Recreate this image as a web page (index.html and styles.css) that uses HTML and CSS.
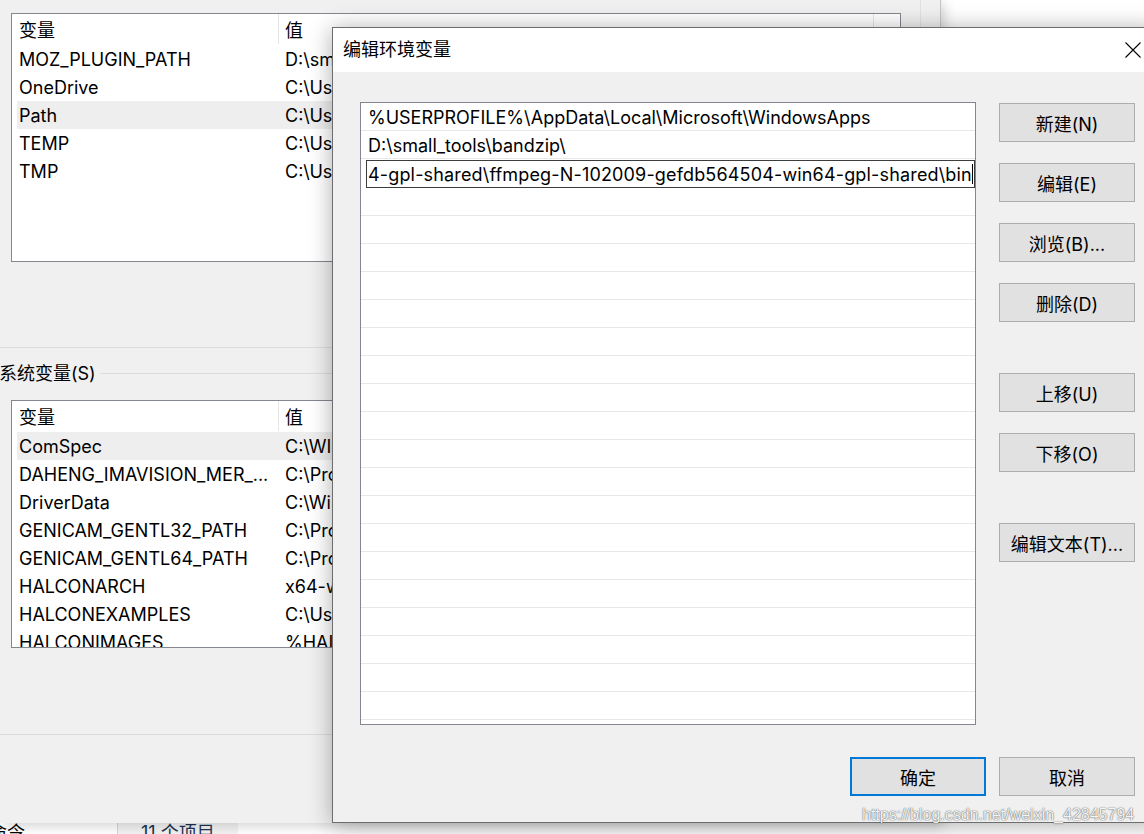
FILE: index.html
```html
<!DOCTYPE html>
<html lang="zh-CN">
<head>
<meta charset="utf-8">
<title>编辑环境变量</title>
<link rel="stylesheet" href="styles.css">
</head>
<body>
<div class="strip">
  <div class="s1"><span class="cut">命令</span></div>
  <div class="s2">11 个项目</div>
  <div class="s3"></div>
</div>

<div class="envwin">
  <div class="envmain">
    <div class="lv lv-user">
      <div class="lv-head"><div class="c1">变量</div><div class="c2">值</div><div class="c3"></div></div>
      <div class="lv-row"><div class="c1">MOZ_PLUGIN_PATH</div><div class="c2">D:\sm</div></div>
      <div class="lv-row"><div class="c1">OneDrive</div><div class="c2">C:\Use</div></div>
      <div class="lv-row sel"><div class="c1">Path</div><div class="c2">C:\Use</div></div>
      <div class="lv-row"><div class="c1">TEMP</div><div class="c2">C:\Use</div></div>
      <div class="lv-row"><div class="c1">TMP</div><div class="c2">C:\Use</div></div>
    </div>
    <div class="sep sep1"></div>
    <div class="group"><span class="glabel">系统变量(S)</span><span class="gline"></span></div>
    <div class="lv lv-sys">
      <div class="lv-head"><div class="c1">变量</div><div class="c2">值</div><div class="c3"></div></div>
      <div class="lv-row sel"><div class="c1">ComSpec</div><div class="c2">C:\WIN</div></div>
      <div class="lv-row"><div class="c1">DAHENG_IMAVISION_MER_...</div><div class="c2">C:\Pro</div></div>
      <div class="lv-row"><div class="c1">DriverData</div><div class="c2">C:\Win</div></div>
      <div class="lv-row"><div class="c1">GENICAM_GENTL32_PATH</div><div class="c2">C:\Pro</div></div>
      <div class="lv-row"><div class="c1">GENICAM_GENTL64_PATH</div><div class="c2">C:\Pro</div></div>
      <div class="lv-row"><div class="c1">HALCONARCH</div><div class="c2">x64-w</div></div>
      <div class="lv-row"><div class="c1">HALCONEXAMPLES</div><div class="c2">C:\Use</div></div>
      <div class="lv-row"><div class="c1">HALCONIMAGES</div><div class="c2">%HAL</div></div>
    </div>
    <div class="sep sep2"></div>
  </div>
  <div class="envside"></div>
</div>

<div class="dialog">
  <div class="titlebar">
    <span class="title">编辑环境变量</span>
    <svg class="close" width="16" height="16" viewBox="0 0 16 16"><path d="M0.5 0.5L15.5 15.5M15.5 0.5L0.5 15.5" stroke="#000" stroke-width="1.1" fill="none"/></svg>
  </div>
  <div class="dlg-body">
    <div class="dlg-main">
      <div class="pathlist">
        <div class="prow">%USERPROFILE%\AppData\Local\Microsoft\WindowsApps</div>
        <div class="prow">D:\small_tools\bandzip\</div>
        <div class="prow edit"><div class="editbox"><span class="etext">4-gpl-shared\ffmpeg-N-102009-gefdb564504-win64-gpl-shared\bin</span><span class="caret"></span></div></div>
        <div class="prow"></div><div class="prow"></div><div class="prow"></div><div class="prow"></div>
        <div class="prow"></div><div class="prow"></div><div class="prow"></div><div class="prow"></div>
        <div class="prow"></div><div class="prow"></div><div class="prow"></div><div class="prow"></div>
        <div class="prow"></div><div class="prow"></div><div class="prow"></div><div class="prow"></div>
        <div class="prow"></div><div class="prow"></div><div class="prow"></div>
      </div>
      <div class="btncol">
        <div class="btn">新建(N)</div>
        <div class="btn">编辑(E)</div>
        <div class="btn">浏览(B)...</div>
        <div class="btn">删除(D)</div>
        <div class="btn far">上移(U)</div>
        <div class="btn">下移(O)</div>
        <div class="btn far">编辑文本(T)...</div>
      </div>
    </div>
    <div class="dlg-footer">
      <div class="btn primary">确定</div>
      <div class="btn">取消</div>
    </div>
  </div>
</div>

<div class="watermark">https://blog.csdn.net/weixin_42845794</div>
</body>
</html>
```
FILE: styles.css
```css
html, body {
  margin: 0;
  padding: 0;
  overflow: hidden;
}
body {
  position: relative;
  width: 1144px;
  height: 834px;
  background: #ffffff;
  font-family: Inter, "Noto Sans CJK SC", sans-serif;
  font-size: 18px;
  color: #000;
}

/* bottom explorer strip */
.strip {
  position: absolute;
  left: 0;
  top: 823px;
  width: 1144px;
  height: 11px;
  display: flex;
  overflow: hidden;
  background: #fff;
  line-height: 18px;
}
.strip .s1 { width: 117px; overflow: hidden; }
.strip .cut { display: inline-block; margin-left: -11px; padding-top: 1px; }
.strip .s2 {
  width: 97px;
  padding-left: 23px;
  border-left: 1px solid #d6d6d6;
  background: #f3f3f3;
  color: #1e3250;
  padding-top: 1px;
  white-space: nowrap;
}
.strip .s3 { flex: 1; }

/* background window */
.envwin {
  position: absolute;
  left: 0;
  top: 0;
  width: 941px;
  height: 823px;
  box-sizing: border-box;
  background: #f0f0f0;
  border-right: 1px solid #c4c4c4;
  display: flex;
  box-shadow: 3px 3px 12px rgba(0,0,0,0.18);
}
.envmain { width: 920px; overflow: hidden; }
.envside { flex: 1; border-left: 1px solid #e1e1e1; }

.lv {
  margin-left: 11px;
  width: 890px;
  box-sizing: border-box;
  border: 1px solid #828790;
  background: #fff;
  overflow: hidden;
}
.lv-user { margin-top: 13px; height: 249px; }
.lv-sys { margin-top: 15px; height: 248px; }

.lv-head {
  display: flex;
  height: 31px;
}
.lv-head > div {
  box-sizing: border-box;
  height: 30px;
  padding-top: 3px;
  line-height: 27px;
  white-space: nowrap;
}
.lv-head .c1 { width: 267px; padding-left: 7px; border-right: 1px solid #e5e5e5; }
.lv-head .c2 { width: 595px; padding-left: 6px; border-right: 1px solid #e5e5e5; }
.lv-head .c3 { flex: 1; }

.lv-row {
  display: flex;
  height: 28px;
  box-sizing: border-box;
  padding-top: 1px;
  line-height: 27px;
  margin-left: 5px;
  white-space: nowrap;
}
.lv-row.sel { background: #eeeeee; }
.lv-row .c1 { width: 262px; box-sizing: border-box; padding-left: 2px; overflow: hidden; }
.lv-row .c2 { width: 53px; box-sizing: border-box; padding-left: 6px; overflow: hidden; }

.sep { height: 1px; background: #dcdcdc; }
.sep1 { margin-top: 85px; }
.sep2 { margin-top: 86px; }

.group {
  margin-top: 13px;
  height: 24px;
  display: flex;
  align-items: center;
}
.glabel { line-height: 24px; padding-top: 2px; margin-left: -1px; white-space: nowrap; }
.gline { flex: 1; height: 1px; background: #dcdcdc; margin-left: 4px; }

/* dialog */
.dialog {
  position: absolute;
  left: 332px;
  top: 27px;
  width: 829px;
  height: 796px;
  box-sizing: border-box;
  border: 1px solid #6d6d6d;
  background: #f0f0f0;
  box-shadow: 0 2px 22px rgba(0,0,0,0.32);
  display: flex;
  flex-direction: column;
}
.titlebar {
  height: 44px;
  flex: none;
  background: #fff;
  display: flex;
  align-items: center;
  padding-left: 10px;
  padding-bottom: 1px;
  box-sizing: border-box;
}
.title { flex: 1; line-height: 24px; }
.close { margin-right: 19px; display: block; }

.dlg-body {
  flex: 1;
  padding: 30px 0 0 27px;
  display: flex;
  flex-direction: column;
}
.dlg-main {
  display: flex;
  align-items: flex-start;
  gap: 23px;
}
.pathlist {
  width: 616px;
  height: 623px;
  box-sizing: border-box;
  border: 1px solid #828790;
  background: #fff;
  overflow: hidden;
}
.prow {
  height: 28px;
  box-sizing: border-box;
  border-bottom: 1px solid #e8e8e8;
  padding-top: 2px;
  line-height: 25px;
  padding-left: 7px;
  white-space: nowrap;
  overflow: hidden;
}
.prow.edit {
  padding: 0 0 0 5px;
  overflow: visible;
  border-bottom: 0;
}
.editbox {
  margin-top: 1px;
  width: 609px;
  height: 28px;
  box-sizing: border-box;
  border: 1px solid #3c3c3c;
  background: #fff;
  padding-left: 1px;
  line-height: 25px;
  display: flex;
  align-items: center;
  overflow: hidden;
}
.etext { letter-spacing: 0.16px; }
.caret { width: 1px; height: 20px; background: #000; margin-left: 0; flex: none; }

.btncol {
  display: flex;
  flex-direction: column;
  gap: 21px;
  margin-top: 1px;
}
.btn {
  width: 136px;
  height: 39px;
  box-sizing: border-box;
  border: 1px solid #adadad;
  background: #e1e1e1;
  display: flex;
  align-items: center;
  justify-content: center;
  white-space: nowrap;
}
.btn.far { margin-top: 30px; }
.btn.primary { border: 2px solid #0078d7; }

.dlg-footer {
  display: flex;
  justify-content: flex-end;
  gap: 13px;
  margin-top: 32px;
  padding-right: 25px;
}

.watermark {
  position: absolute;
  left: 862px;
  top: 805px;
  font-family: "Liberation Sans", Arial, sans-serif;
  font-size: 16px;
  line-height: 20px;
  color: rgba(255,255,255,0.95);
  text-shadow: 0 0 1px rgba(0,0,0,0.7), 0 0 2px rgba(0,0,0,0.3);
  white-space: nowrap;
}
```
